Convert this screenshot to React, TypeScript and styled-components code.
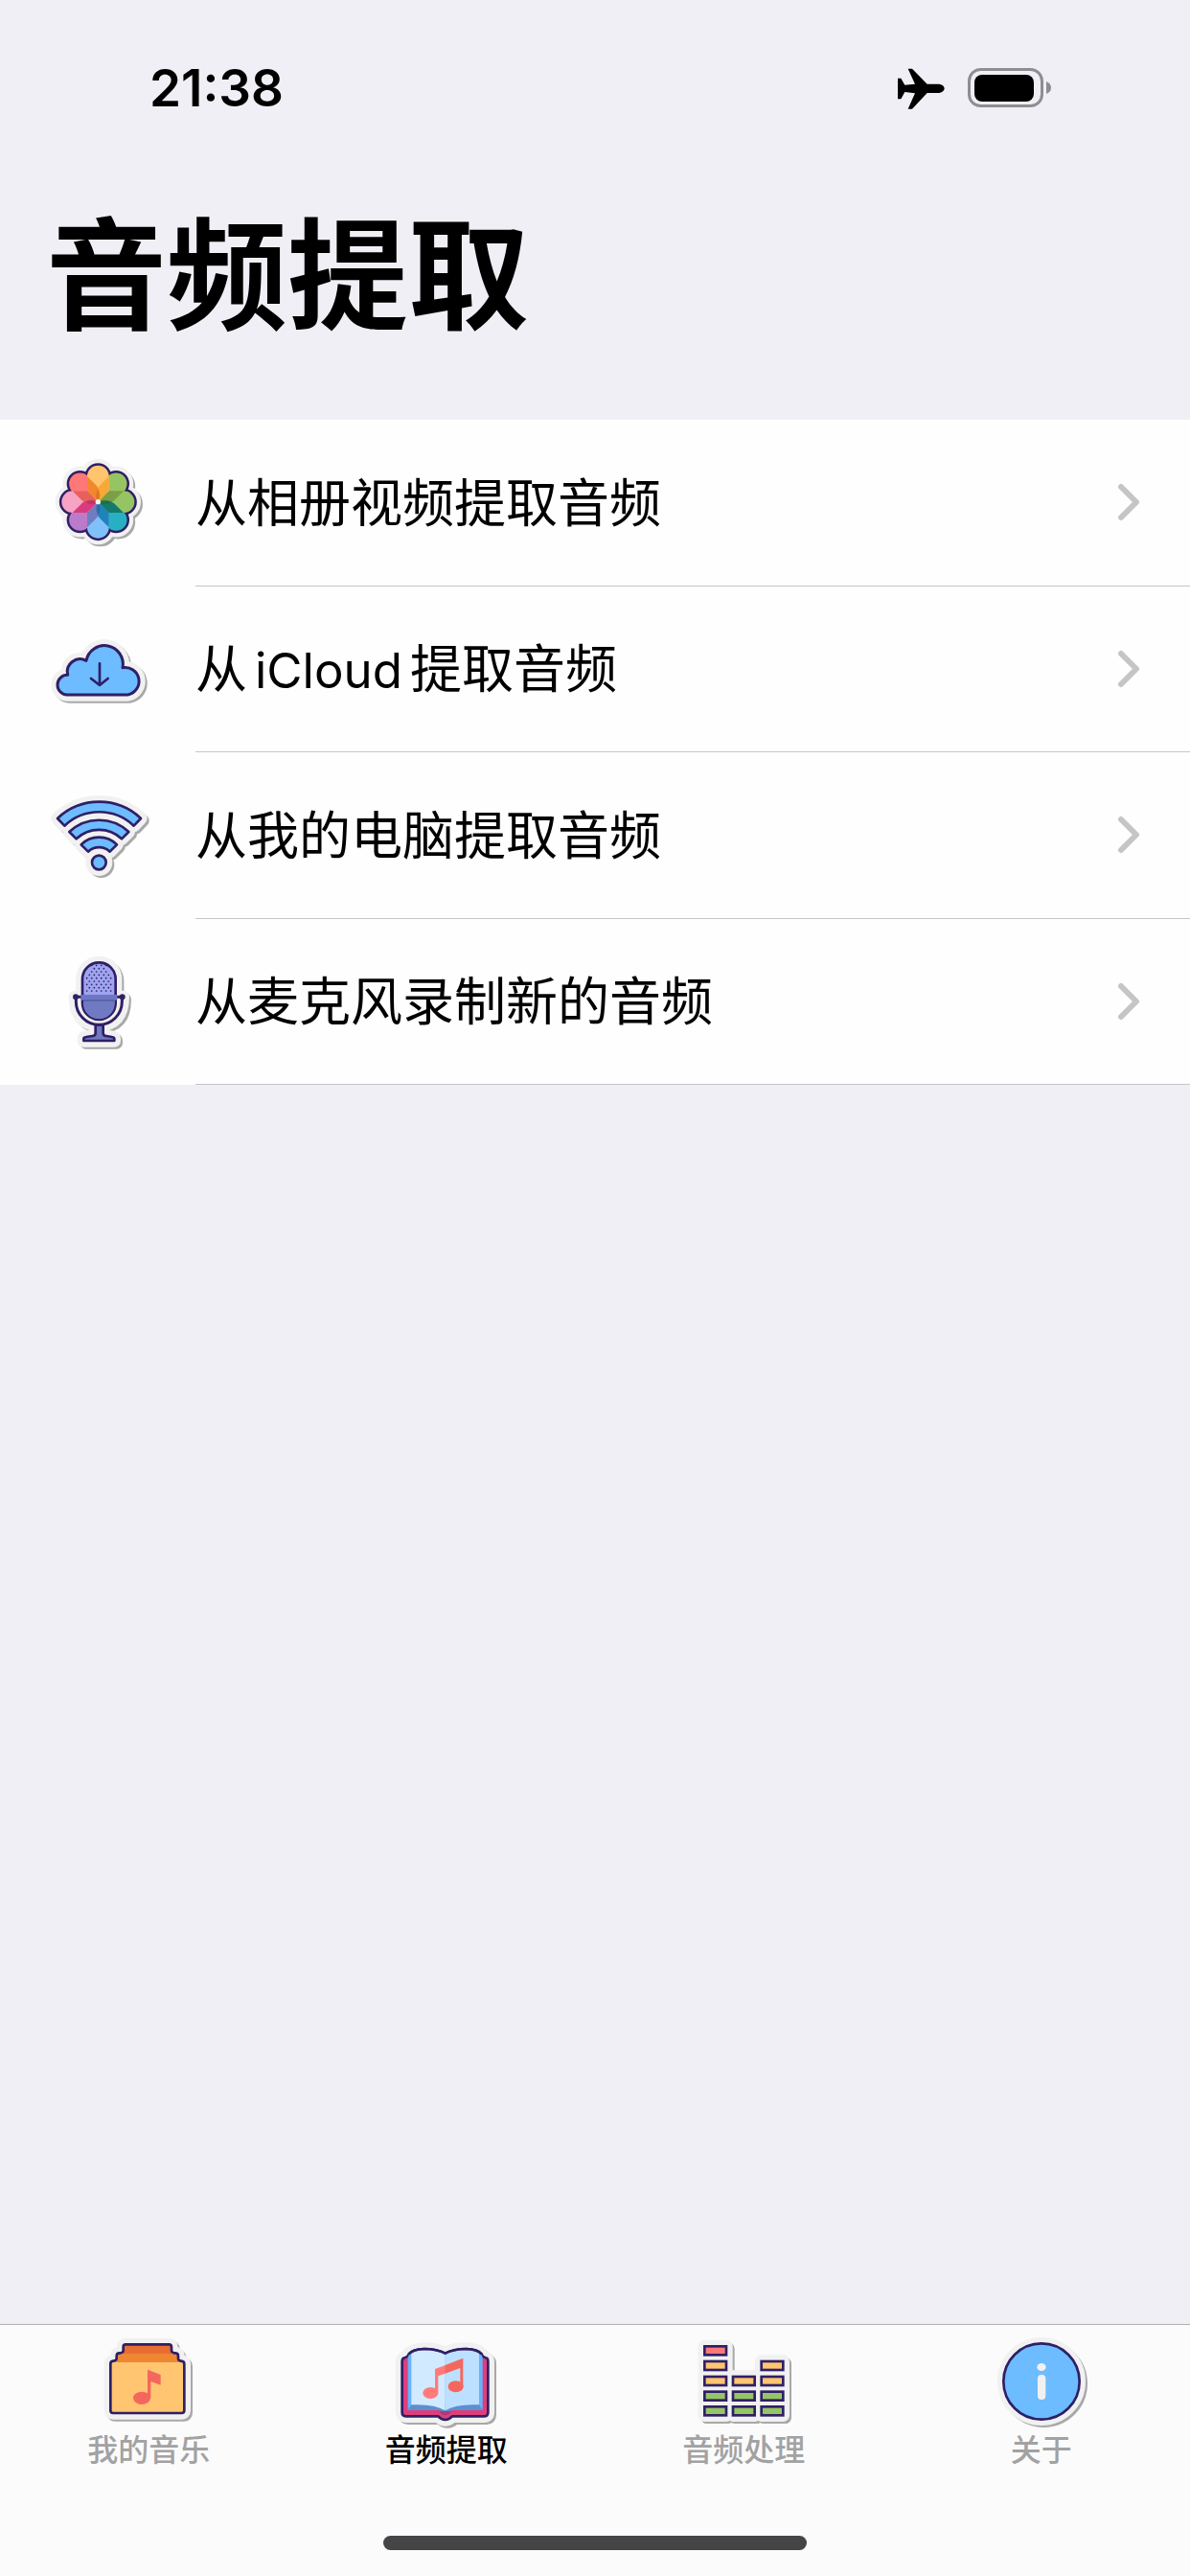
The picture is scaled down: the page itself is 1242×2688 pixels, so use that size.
import React from "react";
import styled, { createGlobalStyle } from "styled-components";

const NAVY = "#2f1f66";
const SKY = "#6dbcff";

const GlobalStyle = createGlobalStyle`
  *, *::before, *::after { box-sizing: border-box; }
  body {
    margin: 0;
    background: #f0eff5;
    color: #000;
    font-family: Inter, "Noto Sans CJK SC", sans-serif;
  }
  button { font: inherit; color: inherit; }
`;

const Screen = styled.div`
  display: flex;
  flex-direction: column;
  min-height: 100vh;
`;

const StatusBar = styled.header`
  display: flex;
  align-items: center;
  justify-content: space-between;
  padding: 62px 145px 0 156px;
`;

const Time = styled.time`
  font-size: 53px;
  font-weight: 600;
  line-height: 60px;
`;

const StatusIcons = styled.div`
  display: flex;
  align-items: center;
  gap: 24px;

  svg { display: block; }
`;

const Content = styled.main`
  flex: 1;
`;

const Title = styled.h1`
  margin: 0;
  padding: 90px 48px 74px;
  font-size: 126px;
  font-weight: 700;
  line-height: 152px;
`;

const List = styled.ul`
  display: grid;
  grid-auto-rows: 1fr;
  min-height: 694px;
  margin: 0;
  padding: 0;
  list-style: none;
  background: #fefefe;
`;

const Item = styled.li`
  display: flex;
`;

const RowButton = styled.button`
  flex: 1;
  display: flex;
  align-items: stretch;
  gap: 53px;
  padding: 0 0 0 55px;
  border: 0;
  background: none;
  text-align: left;
  cursor: pointer;
`;

const StickerSvg = styled.svg`
  flex: none;
  display: block;
  align-self: center;
  width: 96px;
  height: 96px;
  overflow: visible;
`;

const RowBody = styled.span`
  flex: 1;
  display: flex;
  align-items: center;
  justify-content: space-between;
  padding-right: 52px;
  border-bottom: 1px solid #c6c6c8;
`;

const RowLabel = styled.span`
  padding-top: 3px;
  font-size: 54px;
  line-height: 72px;
`;

const Latin = styled.span`
  margin: 0 8px;
  font-size: 51px;
`;

const TabBar = styled.nav`
  padding-bottom: 27px;
  border-top: 1px solid #b0b0b4;
  background: #fbfbfc;
`;

const Tabs = styled.div`
  display: grid;
  grid-template-columns: repeat(4, 1fr);
  padding: 13px 0 69px;
`;

const Tab = styled.button<{ $active: boolean }>`
  display: flex;
  flex-direction: column;
  align-items: center;
  gap: 2px;
  padding: 0;
  border: 0;
  background: none;
  cursor: pointer;
  color: ${(p) => (p.$active ? "#000" : "#a2a2a2")};
`;

const TabLabel = styled.span`
  font-size: 32px;
  font-weight: 500;
  line-height: 40px;
`;

const HomeIndicator = styled.div`
  width: 442px;
  height: 15px;
  margin: 0 auto;
  border-radius: 8px;
  background: #454547;
`;

type StickerProps = {
  origin: [number, number];
  backing: React.ReactNode;
  children: React.ReactNode;
};

/* A drawing with a pale die-cut border and a hard grey shadow under it. */
function Sticker({ origin, backing, children }: StickerProps) {
  return (
    <StickerSvg viewBox={`${origin[0]} ${origin[1]} 288 288`} aria-hidden="true">
      <g fill="#a8a8a8" stroke="#a8a8a8" strokeWidth="38" strokeLinejoin="round" strokeLinecap="round" transform="translate(7 7)">
        {backing}
      </g>
      <g fill="#f1f1f1" stroke="#f1f1f1" strokeWidth="40" strokeLinejoin="round" strokeLinecap="round">
        {backing}
      </g>
      {children}
    </StickerSvg>
  );
}

const straightPetals = ["#ffc56e", "#97c462", "#80c0f8", "#f6a3c4"];
const diagonalPetals = ["#97c462", "#27b0c4", "#ba7bcb", "#ff7877"];
const leftFolds = ["#f0882e", "#7a9f47", "#1f83bb", "#d93c7c"];
const rightFolds = ["#f8a935", "#147a6b", "#707cc0", "#e8605c"];
const cores = ["#c8631c", "#1f6433", "#155f8c", "#a9245c"];
const PETAL = "M153 108A34 34 0 0 1 221 108V154L187 188L153 154Z";
const spin = (deg: number) => `rotate(${deg} 187 188)`;

function PhotosIcon() {
  const ring = [0, 45, 90, 135, 180, 225, 270, 315];
  return (
    <Sticker
      origin={[45, 48]}
      backing={ring.map((a) => <path key={a} d={PETAL} transform={spin(a)} />)}
    >
      <circle cx="187" cy="188" r="138" fill="none" />
      {ring.map((a) => (
        <path key={a} d={PETAL} transform={spin(a)} fill={NAVY} stroke={NAVY} strokeWidth="15" />
      ))}
      {diagonalPetals.map((c, i) => <path key={c} d={PETAL} transform={spin(45 + i * 90)} fill={c} />)}
      {straightPetals.map((c, i) => <path key={c} d={PETAL} transform={spin(i * 90)} fill={c} />)}
      {leftFolds.map((c, i) => (
        <path key={c} d="M153 108L181 136Q191 146 191 160L187 188L153 154Z" transform={spin(i * 90)} fill={c} />
      ))}
      {rightFolds.map((c, i) => (
        <path key={c} d="M221 108L193 136Q183 146 185 160L187 188L221 154Z" transform={spin(i * 90)} fill={c} />
      ))}
      {cores.map((c, i) => (
        <path key={c} d="M187 188Q175 168 187 146Q199 168 187 188Z" transform={spin(i * 90)} fill={c} opacity="0.6" />
      ))}
      <circle cx="187" cy="188" r="8" fill="#f4f4f4" />
    </Sticker>
  );
}

const CLOUD = "M90 255A31 31 0 0 1 92 193A40 40 0 0 1 150 148A58 58 0 1 1 264 170A43 43 0 1 1 280 255Z";

function CloudIcon() {
  return (
    <Sticker origin={[45, 30]} backing={<path d={CLOUD} />}>
      <path d={CLOUD} fill={SKY} stroke={NAVY} strokeWidth="9" strokeLinejoin="round" />
      <path
        d="M192 157V224M165 204L192 225L218 204"
        fill="none" stroke={NAVY} strokeWidth="8" strokeLinecap="round" strokeLinejoin="round"
      />
    </Sticker>
  );
}

function WifiIcon() {
  const bands = [
    "M60 132A190 190 0 0 1 321 132L299 155A158 158 0 0 0 82 155Z",
    "M97 174A136 136 0 0 1 283 174L261 196A103 103 0 0 0 119 196Z",
    "M134 214A79 79 0 0 1 246 214L224 236A49 49 0 0 0 156 236Z",
  ];
  return (
    <Sticker
      origin={[45, 42]}
      backing={
        <>
          {bands.map((d) => <path key={d} d={d} />)}
          <circle cx="190" cy="270" r="22" />
        </>
      }
    >
      <g fill={SKY} stroke={NAVY} strokeWidth="8" strokeLinejoin="round">
        {bands.map((d) => <path key={d} d={d} />)}
        <circle cx="190" cy="270" r="22" />
      </g>
    </Sticker>
  );
}

function MicIcon() {
  const dots: Array<[number, number]> = [];
  for (let r = 0; r < 10; r++) {
    for (let c = 0; c < 6; c++) {
      const x = 152 + c * 15 + (r % 2 ? 8 : 0);
      const y = 82 + r * 10;
      const narrow = y < 95 ? 24 : y < 110 ? 34 : 44;
      if (Math.abs(x - 190) < narrow && y < 172) dots.push([x, y]);
    }
  }
  const base = "M179 268V294Q179 302 170 303L150 306Q142 307 142 312V318H238V312Q238 307 230 306L212 303Q203 302 203 294V268Z";
  return (
    <Sticker
      origin={[45, 51]}
      backing={
        <>
          <path d="M138 125A52 52 0 0 1 242 125V181H265Q265 268 190 268Q115 268 115 181H138Z" />
          <path d={base} />
        </>
      }
    >
      <path d={base} fill="#6f78c0" stroke={NAVY} strokeWidth="8" strokeLinejoin="round" />
      <path d="M118 181V196A72 72 0 0 0 262 196V181" fill="none" stroke={NAVY} strokeWidth="9" />
      <path d="M115 181H265" stroke={NAVY} strokeWidth="9" />
      <path d="M138 125A52 52 0 0 1 242 125V200A52 52 0 0 1 138 200Z" fill="#9ea4ee" stroke={NAVY} strokeWidth="8" />
      <path d="M141 188H239V201A49 49 0 0 1 141 201Z" fill="#707ac2" />
      <rect x="133" y="174" width="114" height="17" rx="4" fill="#6c76c4" />
      <rect x="141" y="189" width="98" height="6" fill="#5a64ad" />
      <g fill={NAVY}>
        <circle cx="117" cy="181" r="9" />
        <circle cx="263" cy="181" r="9" />
        {dots.map(([x, y]) => <circle key={`${x}-${y}`} cx={x} cy={y} r="2.6" />)}
      </g>
    </Sticker>
  );
}

const ALBUM =
  "M76 316V170Q76 162 84 161Q95 160 95 152V145Q95 136 104 136H106Q116 135 116 128V116Q116 109 123 109H259Q267 109 267 117V127Q267 135 275 136H280Q288 137 288 145V152Q288 160 297 161Q307 162 307 170V316Q307 324 299 324H84Q76 324 76 316Z";

function AlbumIcon() {
  return (
    <Sticker origin={[51, 87]} backing={<path d={ALBUM} />}>
      <path d={ALBUM} fill="#ffc570" />
      <path d="M116 140V109H267V140Z" fill="#e96d30" />
      <path d="M95 165V145Q95 139 104 139H280Q288 139 288 145V165Z" fill="#ef8732" />
      <path d={ALBUM} fill="none" stroke={NAVY} strokeWidth="8" strokeLinejoin="round" />
      <g fill="#f4675e">
        <ellipse cx="174" cy="277" rx="27" ry="20" />
        <path d="M192 188L233 204V236L202 225V277H192Z" />
      </g>
    </Sticker>
  );
}

const BOOK =
  "M89 162Q89 151 99 150Q108 148 110 139Q124 124 158 123Q198 123 224 137Q250 123 290 123Q324 124 338 139Q340 148 349 150Q358 151 358 162V322Q358 334 346 334H246Q236 345 224 345Q212 345 202 334H101Q89 334 89 322Z";

function BookIcon() {
  return (
    <Sticker origin={[84, 87]} backing={<path d={BOOK} />}>
      <path d={BOOK} fill="#dc3f7c" stroke={NAVY} strokeWidth="8" strokeLinejoin="round" />
      <path d="M107 150L114 134H334L341 150V314H107Z" fill="#64b4fb" />
      <path d="M107 314L119 296H329L341 314H246Q236 318 224 326Q212 318 202 314Z" fill="#5b8fd0" />
      <path d="M118 137Q134 127 160 127Q198 127 224 141V316Q188 294 118 298Z" fill="#d2eaff" />
      <path d="M330 137Q314 127 288 127Q250 127 224 141V316Q260 294 330 298Z" fill="#bce0ff" />
      <path d="M110 139Q124 124 158 123Q198 123 224 137Q250 123 290 123Q324 124 338 139" fill="none" stroke={NAVY} strokeWidth="8" />
      <path d="M206 318H242Q236 331 224 331Q212 331 206 318Z" fill="#b03878" />
      <g fill="#ff7b79">
        <ellipse cx="178" cy="261" rx="24" ry="18" />
        <path d="M192 186L225 174V200L202 208V261H192Z" />
      </g>
      <g fill="#f4675e">
        <ellipse cx="257" cy="241" rx="24" ry="18" />
        <path d="M224 174L280 152V242H271V183L224 200Z" />
      </g>
    </Sticker>
  );
}

function EqualizerIcon() {
  const tones = ["#ff7878", "#ffc570", "#ffc570", "#96c564", "#96c564"];
  const rowTop = [115, 162, 210, 257, 304];
  const columns = [
    { x: 106, from: 0 },
    { x: 195, from: 2 },
    { x: 284, from: 1 },
  ];
  return (
    <Sticker
      origin={[84, 87]}
      backing={columns.map(({ x, from }) => (
        <rect key={x} x={x} y={rowTop[from]} width="68" height={331 - rowTop[from]} />
      ))}
    >
      {columns.map(({ x, from }) =>
        rowTop.slice(from).map((y, i) => (
          <rect key={`${x}-${y}`} x={x} y={y} width="68" height="27" fill={tones[from + i]} stroke={NAVY} strokeWidth="8" />
        )),
      )}
    </Sticker>
  );
}

function InfoIcon() {
  return (
    <Sticker origin={[57, 87]} backing={<circle cx="201" cy="225" r="118" />}>
      <circle cx="201" cy="225" r="119" fill={SKY} stroke={NAVY} strokeWidth="8" />
      <ellipse cx="201" cy="180" rx="14" ry="12" fill="#f1f1f1" />
      <rect x="189" y="204" width="25" height="78" rx="12" fill="#f1f1f1" />
    </Sticker>
  );
}

function Chevron() {
  return (
    <svg width="24" height="40" viewBox="0 0 24 40" aria-hidden="true">
      <path d="M4 4L20 20L4 36" fill="none" stroke="#c5c5c7" strokeWidth="6" strokeLinecap="round" strokeLinejoin="round" />
    </svg>
  );
}

function Airplane() {
  return (
    <svg width="49" height="43" viewBox="112 64 147 129" aria-hidden="true">
      <path d="M112 96H122L134 117L166 114L144 66H157L204 114H242Q258 118 258 128Q258 138 242 142H204L157 192H144L166 143L134 139L122 161H112Z" />
    </svg>
  );
}

function Battery() {
  return (
    <svg width="87" height="42" viewBox="0 0 87 42" aria-hidden="true">
      <rect x="1.5" y="1.5" width="76" height="38" rx="12" fill="none" stroke="#8e8e92" strokeWidth="3" />
      <rect x="7" y="7" width="62" height="28" rx="8" />
      <path d="M82 14Q87 16 87 20.500Q87 25 82 27Z" fill="#8e8e92" />
    </svg>
  );
}

const sources = [
  { id: "photos", icon: <PhotosIcon />, label: "从相册视频提取音频" },
  { id: "icloud", icon: <CloudIcon />, label: <>从<Latin>iCloud</Latin>提取音频</> },
  { id: "computer", icon: <WifiIcon />, label: "从我的电脑提取音频" },
  { id: "mic", icon: <MicIcon />, label: "从麦克风录制新的音频" },
];

const tabs = [
  { label: "我的音乐", icon: <AlbumIcon /> },
  { label: "音频提取", icon: <BookIcon /> },
  { label: "音频处理", icon: <EqualizerIcon /> },
  { label: "关于", icon: <InfoIcon /> },
];

export default function App() {
  const [current, setCurrent] = React.useState("音频提取");
  return (
    <Screen lang="zh-CN">
      <GlobalStyle />
      <StatusBar>
        <Time>21:38</Time>
        <StatusIcons>
          <Airplane />
          <Battery />
        </StatusIcons>
      </StatusBar>
      <Content>
        <Title>音频提取</Title>
        <List>
          {sources.map(({ id, icon, label }) => (
            <Item key={id}>
              <RowButton type="button">
                {icon}
                <RowBody>
                  <RowLabel>{label}</RowLabel>
                  <Chevron />
                </RowBody>
              </RowButton>
            </Item>
          ))}
        </List>
      </Content>
      <TabBar>
        <Tabs>
          {tabs.map(({ label, icon }) => (
            <Tab
              key={label}
              type="button"
              $active={label === current}
              aria-current={label === current ? "page" : undefined}
              onClick={() => setCurrent(label)}
            >
              {icon}
              <TabLabel>{label}</TabLabel>
            </Tab>
          ))}
        </Tabs>
        <HomeIndicator />
      </TabBar>
    </Screen>
  );
}
